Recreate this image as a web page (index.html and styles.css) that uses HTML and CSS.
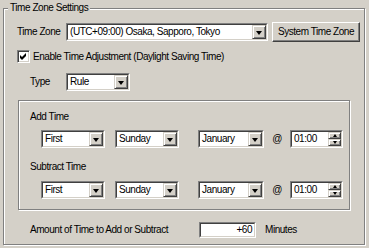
FILE: index.html
```html
<!DOCTYPE html>
<html>
<head>
<meta charset="utf-8">
<link rel="stylesheet" href="styles.css">
</head>
<body>
<div class="group outer">
  <span class="legend">Time Zone Settings</span>
  <div class="row row-tz">
    <span class="lbl lbl-tz">Time Zone</span>
    <div class="combo combo-tz"><div class="combo-in"><span class="val">(UTC+09:00) Osaka, Sapporo, Tokyo</span><span class="drop"><i class="tri"></i></span></div></div>
    <div class="btn">System Time Zone</div>
  </div>
  <div class="row row-chk">
    <span class="chk"><svg width="9" height="9" viewBox="0 0 9 9"><path d="M1 3 L3 5 L7 1 L7 4 L3 8 L1 6 Z" fill="#000"/></svg></span>
    <span class="lbl">Enable Time Adjustment (Daylight Saving Time)</span>
  </div>
  <div class="row row-type">
    <span class="lbl lbl-type">Type</span>
    <div class="combo combo-type"><div class="combo-in"><span class="val">Rule</span><span class="drop"><i class="tri"></i></span></div></div>
  </div>
  <div class="group inner">
    <div class="sub-title">Add Time</div>
    <div class="rule-row rule-first">
      <div class="combo c-week"><div class="combo-in"><span class="val">First</span><span class="drop"><i class="tri"></i></span></div></div>
      <div class="combo c-day"><div class="combo-in"><span class="val">Sunday</span><span class="drop"><i class="tri"></i></span></div></div>
      <div class="combo c-month"><div class="combo-in"><span class="val">January</span><span class="drop"><i class="tri"></i></span></div></div>
      <span class="at">@</span>
      <div class="spin"><div class="spin-in"><span class="val">01:00</span><span class="spin-btns"><span class="sb"><i class="up"></i></span><span class="sb"><i class="dn"></i></span></span></div></div>
    </div>
    <div class="sub-title sub-2">Subtract Time</div>
    <div class="rule-row">
      <div class="combo c-week"><div class="combo-in"><span class="val">First</span><span class="drop"><i class="tri"></i></span></div></div>
      <div class="combo c-day"><div class="combo-in"><span class="val">Sunday</span><span class="drop"><i class="tri"></i></span></div></div>
      <div class="combo c-month"><div class="combo-in"><span class="val">January</span><span class="drop"><i class="tri"></i></span></div></div>
      <span class="at">@</span>
      <div class="spin"><div class="spin-in"><span class="val">01:00</span><span class="spin-btns"><span class="sb"><i class="up"></i></span><span class="sb"><i class="dn"></i></span></span></div></div>
    </div>
  </div>
  <div class="row row-amount">
    <span class="lbl lbl-amount">Amount of Time to Add or Subtract</span>
    <div class="textbox"><div class="textbox-in">+60</div></div>
    <span class="lbl lbl-min">Minutes</span>
  </div>
</div>
</body>
</html>
```
FILE: styles.css
```css
* { box-sizing: border-box; }
html, body { margin: 0; padding: 0; }
body {
  width: 369px;
  height: 248px;
  background: #d4d0c8;
  font-family: "Liberation Sans", Arial, sans-serif;
  font-size: 10px;
  letter-spacing: -0.45px;
  color: #000;
  overflow: hidden;
}
.group {
  border: 1px solid #808080;
  box-shadow: inset 1px 1px 0 #fff, 1px 1px 0 #fff;
}
.outer {
  position: relative;
  margin: 8px 0 0 3px;
  width: 362px;
  padding: 13px 0 6px 13px;
}
.legend {
  position: absolute;
  top: -7px;
  left: 4px;
  padding: 0 2px;
  line-height: 12px;
  background: #d4d0c8;
}
.row { display: flex; align-items: center; }
.lbl { line-height: 12px; white-space: nowrap; }
.row-tz { height: 20px; }
.lbl-tz { width: 49px; }
.combo {
  height: 18px;
  border: 1px solid;
  border-color: #808080 #fff #fff #808080;
  background: #fff;
}
.combo-in {
  height: 100%;
  display: flex;
  border: 1px solid;
  border-color: #404040 #d4d0c8 #d4d0c8 #404040;
}
.val {
  flex: 1;
  padding-left: 2px;
  line-height: 14px;
  white-space: nowrap;
  overflow: hidden;
}
.drop {
  width: 14px;
  height: 14px;
  background: #d4d0c8;
  border: 1px solid;
  border-color: #d4d0c8 #404040 #404040 #d4d0c8;
  box-shadow: inset 1px 1px 0 #fff, inset -1px -1px 0 #808080;
  display: flex;
  align-items: center;
  justify-content: center;
}
.tri {
  display: block;
  width: 0;
  height: 0;
  border-left: 3.5px solid transparent;
  border-right: 3.5px solid transparent;
  border-top: 4px solid #000;
  margin-top: 1px;
}
.combo-tz { width: 202px; }
.btn {
  margin-left: 4px;
  width: 88px;
  height: 20px;
  border: 1px solid;
  border-color: #fff #404040 #404040 #fff;
  box-shadow: inset -1px -1px 0 #808080;
  display: flex;
  align-items: center;
  justify-content: center;
  line-height: 12px;
  white-space: nowrap;
}
.row-chk { margin-top: 8px; height: 13px; }
.chk {
  width: 13px;
  height: 13px;
  background: #fff;
  border: 1px solid;
  border-color: #808080 #fff #fff #808080;
  box-shadow: inset 1px 1px 0 #404040, inset -1px -1px 0 #d4d0c8;
  display: flex;
  align-items: center;
  justify-content: center;
  margin-right: 3px;
}
.chk svg { display: block; }
.row-type { margin-top: 10px; padding-left: 13px; height: 18px; }
.lbl-type { width: 36px; }
.combo-type { width: 64px; }
.inner {
  margin: 9px 0 0 1px;
  width: 332px;
  height: 110px;
  padding: 10px 0 0 11px;
}
.sub-title { line-height: 12px; }
.sub-2 { margin-top: 13px; }
.rule-row {
  display: flex;
  align-items: center;
  margin: 8px 0 0 11px;
  height: 18px;
}
.rule-first { margin-top: 7px; }
.c-week { width: 64px; }
.c-day { width: 64px; margin-left: 10px; }
.c-month { width: 66px; margin-left: 19px; }
.at { width: 26px; text-align: center; line-height: 12px; }
.spin {
  width: 53px;
  height: 18px;
  border: 1px solid;
  border-color: #808080 #fff #fff #808080;
  background: #fff;
}
.spin-in {
  height: 100%;
  display: flex;
  border: 1px solid;
  border-color: #404040 #d4d0c8 #d4d0c8 #404040;
}
.spin-btns { width: 13px; display: flex; flex-direction: column; }
.sb {
  flex: 1;
  background: #d4d0c8;
  border: 1px solid;
  border-color: #d4d0c8 #404040 #404040 #d4d0c8;
  box-shadow: inset 1px 1px 0 #fff, inset -1px -1px 0 #808080;
  display: flex;
  align-items: center;
  justify-content: center;
}
.up, .dn { display: block; width: 0; height: 0; border-left: 2.5px solid transparent; border-right: 2.5px solid transparent; }
.up { border-bottom: 3px solid #000; }
.dn { border-top: 3px solid #000; }
.row-amount { margin-top: 12px; padding-left: 13px; height: 16px; }
.lbl-amount { width: 169px; }
.textbox {
  width: 57px;
  height: 16px;
  border: 1px solid;
  border-color: #808080 #fff #fff #808080;
  background: #fff;
}
.textbox-in {
  height: 100%;
  border: 1px solid;
  border-color: #404040 #d4d0c8 #d4d0c8 #404040;
  text-align: right;
  padding-right: 2px;
  line-height: 12px;
}
.lbl-min { margin-left: 9px; }
```
